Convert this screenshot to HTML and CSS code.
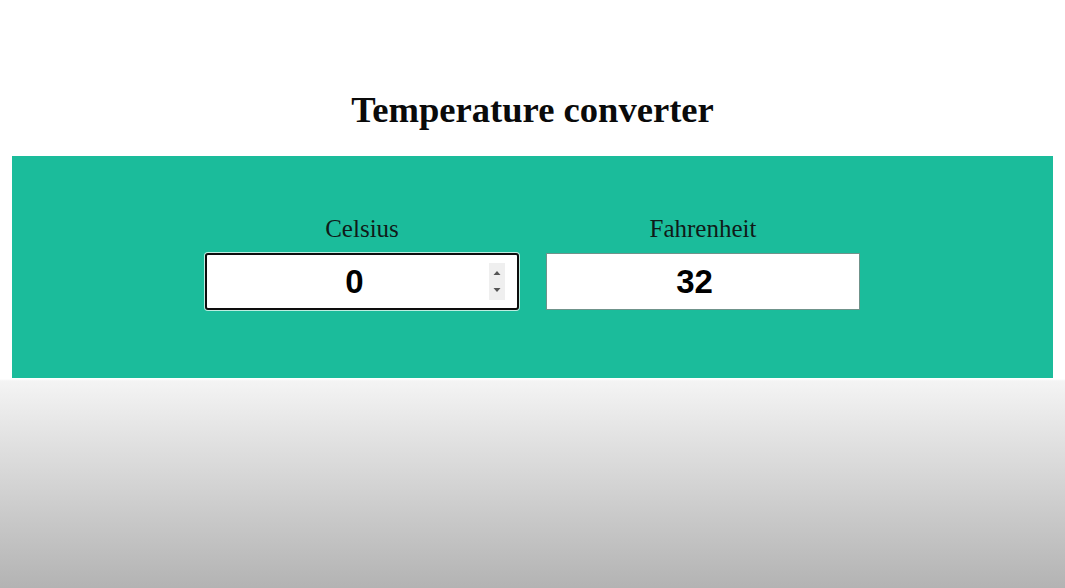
FILE: index.html
```html
<!DOCTYPE html>
<html lang="en">
<head>
<meta charset="utf-8">
<title>Temperature converter</title>
<link rel="stylesheet" href="styles.css">
</head>
<body>
<div class="page">
  <h1 class="title">Temperature converter</h1>
  <section class="panel">
    <div class="field">
      <label class="label" for="c">Celsius</label>
      <div class="input-wrap">
        <input class="temp temp-focused" id="c" type="text" value="0">
        <span class="spinner" aria-hidden="true">
          <svg width="16" height="37" viewBox="0 0 16 37">
            <rect x="0" y="0" width="16" height="37" fill="#efefef"/>
            <path d="M4.5 12 L8 8 L11.5 12 Z" fill="#555"/>
            <path d="M4.5 25 L8 29 L11.5 25 Z" fill="#555"/>
          </svg>
        </span>
      </div>
    </div>
    <div class="field">
      <label class="label" for="f">Fahrenheit</label>
      <div class="input-wrap">
        <input class="temp temp-plain" id="f" type="text" value="32">
      </div>
    </div>
  </section>
</div>
</body>
</html>
```

FILE: styles.css
```css
html, body {
  margin: 0;
  padding: 0;
}

body {
  min-height: 100vh;
  background: linear-gradient(to bottom, #ffffff 0, #ffffff 379px, #f4f4f4 381px, #b3b3b3 100%);
  font-family: "Liberation Serif", "Times New Roman", serif;
  color: #000;
}

.page {
  padding: 0 12px;
  display: flex;
  flex-direction: column;
}

.title {
  margin: 89px 0 26px;
  font-size: 36.6px;
  line-height: 41px;
  font-weight: bold;
  text-align: center;
  color: #0a0a0a;
}

.panel {
  background: #1bbc9b;
  height: 222px;
  box-sizing: border-box;
  padding-top: 58px;
  display: flex;
  justify-content: center;
  gap: 27px;
}

.field {
  display: flex;
  flex-direction: column;
  align-items: center;
  gap: 10px;
  width: 314px;
}

.label {
  font-size: 25px;
  line-height: 29px;
  color: #101a18;
}

.input-wrap {
  position: relative;
  width: 314px;
  height: 57px;
}

.temp {
  width: 100%;
  height: 100%;
  box-sizing: border-box;
  margin: 0;
  border: 1px solid #6f938b;
  background: #fff;
  font-family: "Liberation Sans", Arial, sans-serif;
  font-weight: bold;
  font-size: 33px;
  text-align: center;
  color: #000;
  padding: 0 4px;
  outline: none;
}

.temp-plain {
  padding-right: 21px;
}

.temp-focused {
  border: 2px solid #0d0d0d;
  border-radius: 3px;
  box-shadow: 0 0 0 1px #bfeee2;
  padding-right: 19px;
}

.spinner {
  position: absolute;
  right: 14px;
  top: 10px;
  width: 16px;
  height: 37px;
  display: block;
}

.spinner svg {
  display: block;
}
```
